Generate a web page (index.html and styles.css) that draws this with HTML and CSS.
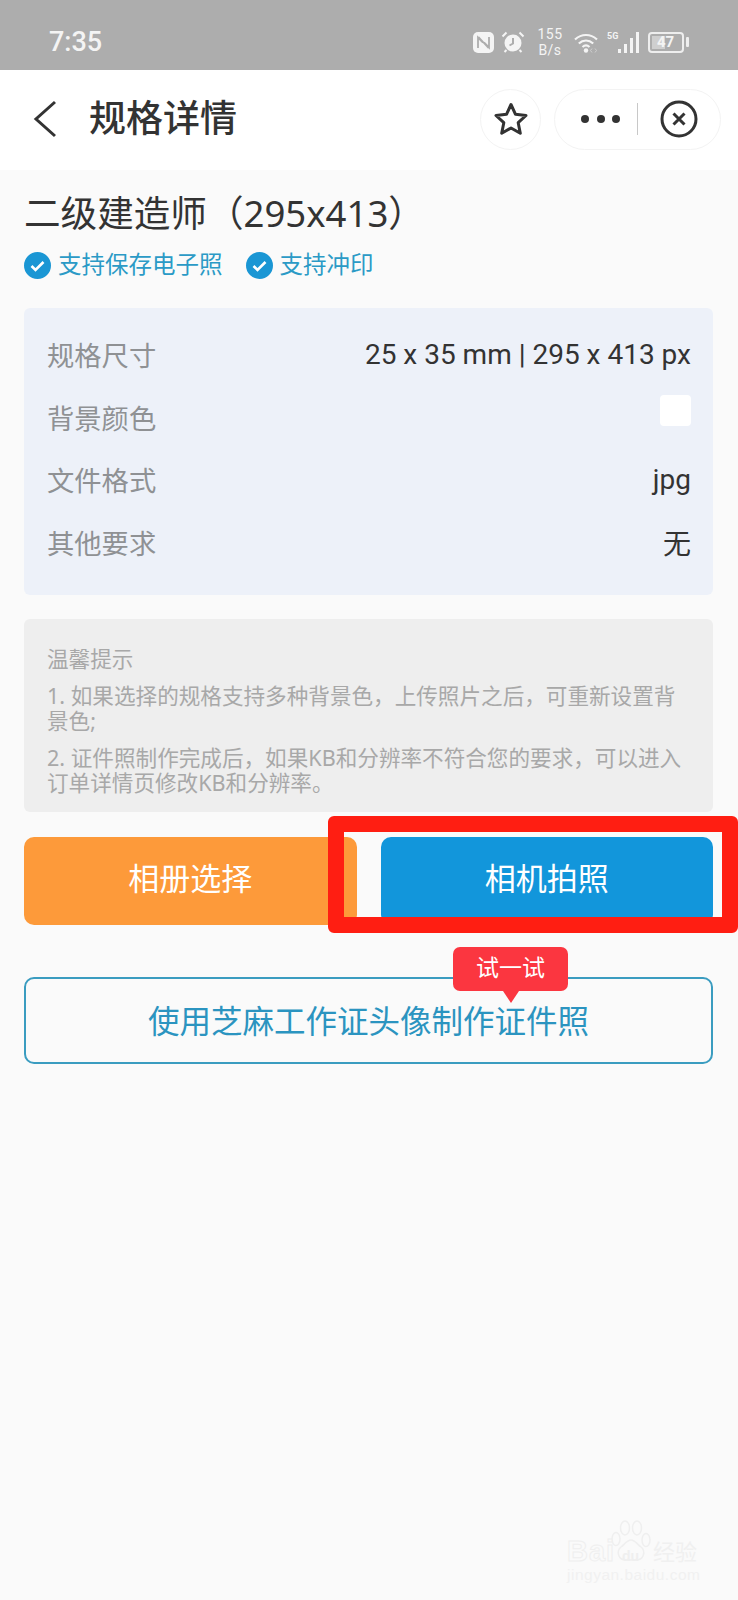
FILE: index.html
```html
<!DOCTYPE html>
<html lang="zh-CN">
<head>
<meta charset="utf-8">
<title>规格详情</title>
<link rel="stylesheet" href="styles.css">
</head>
<body>
<div class="phone">
  <header class="status">
    <span class="time">7:35</span>
    <div class="status-icons">
      <svg class="ic-nfc" width="21" height="21" viewBox="0 0 21 21"><rect width="21" height="21" rx="5" fill="#f4f4f4"/><path d="M5 16V5.500l5 5M16 5v10.500l-5-5M5.500 5l10 11" fill="none" stroke="#adadad" stroke-width="1.800"/></svg>
      <svg class="ic-alarm" width="24" height="22" viewBox="0 0 24 22"><circle cx="12" cy="12" r="8.500" fill="#f4f4f4"/><path d="M12 7v5.500l-3.500 2" fill="none" stroke="#adadad" stroke-width="2"/><path d="M1.500 5.500 5.500 1.500M22.500 5.500 18.500 1.500M5.500 19 3.500 21M18.500 19 20.500 21" stroke="#f4f4f4" stroke-width="2"/></svg>
      <div class="speed"><span>155</span><span>B/s</span></div>
      <svg class="ic-wifi" width="26" height="21" viewBox="0 0 26 21"><path d="M1 7.500c6.500-6 15.500-6 22 0M4.800 11.500c4.300-4 10.100-4 14.400 0M8.500 15c2.200-2 4.800-2 7 0" fill="none" stroke="#f4f4f4" stroke-width="2.200"/><circle cx="12" cy="18.500" r="2.200" fill="#f4f4f4"/><path d="M18 16.500l-1.500 2 1.500 2M21 16.500l1.500 2-1.500 2" fill="none" stroke="#cfcfcf" stroke-width="1"/></svg>
      <div class="net">
        <span class="fiveg">5G</span>
        <svg width="23" height="21" viewBox="0 0 23 21"><rect x="0" y="17" width="3" height="4" fill="#f4f4f4"/><rect x="6" y="12" width="3" height="9" fill="#f4f4f4"/><rect x="12" y="6" width="3" height="15" fill="#f4f4f4"/><rect x="18" y="0" width="3" height="21" fill="#f4f4f4"/></svg>
      </div>
      <div class="battery-wrap">
        <div class="battery"><span class="battery-num">47</span></div>
        <i class="battery-nub"></i>
      </div>
    </div>
  </header>

  <nav class="nav">
    <svg class="back" width="24" height="38" viewBox="0 0 24 38"><path d="M22 2 3 19l19 17" fill="none" stroke="#333" stroke-width="3"/></svg>
    <h1 class="nav-title">规格详情</h1>
    <div class="nav-actions">
      <div class="star-btn">
        <svg width="36" height="36" viewBox="0 0 36 36"><path d="M18 3.500l4.500 9.800 10.500 1.200-7.800 7.200 2.100 10.600L18 27l-9.300 5.300 2.100-10.600L3 14.500l10.500-1.200z" fill="none" stroke="#333" stroke-width="3" stroke-linejoin="round"/></svg>
      </div>
      <div class="capsule">
        <div class="dots"><i></i><i></i><i></i></div>
        <i class="divider"></i>
        <svg width="38" height="38" viewBox="0 0 38 38"><circle cx="19" cy="19" r="17" fill="none" stroke="#333" stroke-width="3"/><path d="M13.500 13.500l11 11M24.500 13.500l-11 11" stroke="#333" stroke-width="3"/></svg>
      </div>
    </div>
  </nav>

  <main class="main">
    <h2 class="title">二级建造师（295x413）</h2>
    <div class="tags">
      <div class="tag">
        <svg width="27" height="27" viewBox="0 0 27 27"><circle cx="13.500" cy="13.500" r="13.500" fill="#1a96d4"/><path d="M7.500 14l4 4 8-8" fill="none" stroke="#fff" stroke-width="2.600"/></svg>
        <span class="tag-text">支持保存电子照</span>
      </div>
      <div class="tag">
        <svg width="27" height="27" viewBox="0 0 27 27"><circle cx="13.500" cy="13.500" r="13.500" fill="#1a96d4"/><path d="M7.500 14l4 4 8-8" fill="none" stroke="#fff" stroke-width="2.600"/></svg>
        <span class="tag-text">支持冲印</span>
      </div>
    </div>

    <section class="spec">
      <div class="spec-row"><span class="spec-label">规格尺寸</span><span class="spec-value">25 x 35 mm | 295 x 413 px</span></div>
      <div class="spec-row"><span class="spec-label">背景颜色</span><i class="swatch"></i></div>
      <div class="spec-row"><span class="spec-label">文件格式</span><span class="spec-value">jpg</span></div>
      <div class="spec-row"><span class="spec-label">其他要求</span><span class="spec-value">无</span></div>
    </section>

    <section class="tips">
      <p class="tips-head">温馨提示</p>
      <p class="tips-line">1. 如果选择的规格支持多种背景色，上传照片之后，可重新设置背景色;</p>
      <p class="tips-line">2. 证件照制作完成后，如果KB和分辨率不符合您的要求，可以进入订单详情页修改KB和分辨率。</p>
    </section>

    <div class="actions">
      <div class="btn btn-orange">相册选择</div>
      <div class="btn btn-blue">相机拍照</div>
    </div>

    <div class="outline-btn">
      <span>使用芝麻工作证头像制作证件照</span>
      <div class="badge">试一试</div>
    </div>
  </main>

  <div class="highlight"></div>

  <div class="watermark">
    <svg class="paw" width="40" height="46" viewBox="0 0 40 46"><g fill="none" stroke="#efefef" stroke-width="1.500"><ellipse cx="5" cy="19" rx="4" ry="6.500"/><ellipse cx="14" cy="8" rx="4.500" ry="7"/><ellipse cx="26" cy="8" rx="4.500" ry="7"/><ellipse cx="35" cy="20" rx="4" ry="6.500"/><path d="M20 20c-4 0-6 4-10 7-5 4-3 13 5 13h10c8 0 10-9 5-13-4-3-6-7-10-7z"/></g></svg>
    <span class="wm-bai">Bai</span>
    <span class="wm-du">du</span>
    <span class="wm-jy">经验</span>
    <span class="wm-url">jingyan.baidu.com</span>
  </div>
</div>
</body>
</html>
```

FILE: styles.css
```css
* { box-sizing: border-box; }
html, body { margin: 0; padding: 0; }
body { font-family: "Noto Sans", "Noto Sans CJK SC", sans-serif; }
h1, h2, p { margin: 0; font-weight: 400; }
i { display: block; }

.phone { position: relative; width: 738px; height: 1600px; background: #fafafa; overflow: hidden; }

.status { height: 70px; background: #adadad; display: flex; align-items: center; justify-content: space-between; padding: 0 49px; color: #f4f4f4; font-family: Roboto, sans-serif; }
.time { font-size: 27px; font-weight: 500; line-height: 30px; margin-top: 14px; }
.status-icons { display: flex; align-items: center; margin-top: 14px; }
.ic-nfc { margin-right: 7px; }
.ic-alarm { margin-right: 12px; }
.speed { display: flex; flex-direction: column; align-items: center; width: 26px; font-size: 14px; letter-spacing: .5px; line-height: 16.500px; margin-right: 11px; }
.ic-wifi { margin-right: 6px; }
.net { position: relative; display: flex; width: 35px; justify-content: flex-end; margin-right: 7px; }
.fiveg { position: absolute; left: 1px; top: -1px; font-size: 9px; line-height: 10px; font-weight: 700; }
.battery-wrap { display: flex; align-items: center; gap: 2px; }
.battery { width: 36px; height: 21px; border: 2px solid #eee; border-radius: 4px; padding: 2px; display: flex; background: linear-gradient(90deg, #cfcfcf 0 47%, transparent 47%); background-clip: content-box; }
.battery-num { font-size: 15px; line-height: 13px; font-weight: 700; padding-left: 5px; color: #f4f4f4; }
.battery-nub { width: 3px; height: 10px; border-radius: 1px; background: #eee; }

.nav { height: 100px; background: #fff; display: flex; align-items: center; padding: 0 17px 4px 33px; }
.back { margin-right: 32px; margin-top: 2px; }
.nav-title { font-size: 37px; line-height: 50px; color: #333; font-weight: 500; flex: 1; }
.nav-actions { display: flex; gap: 13px; align-items: center; margin-top: 2px; }
.star-btn { width: 61px; height: 61px; border: 1px solid #f3f3f3; border-radius: 50%; display: flex; align-items: center; justify-content: center; }
.capsule { width: 167px; height: 61px; border: 1px solid #f3f3f3; border-radius: 31px; display: flex; align-items: center; padding: 0 21px 0 26px; }
.dots { display: flex; gap: 7.500px; }
.dots i { width: 8px; height: 8px; border-radius: 50%; background: #333; }
.divider { width: 1px; height: 32px; background: #c8c8c8; margin: 0 22px 0 17px; }

.main { padding: 18px 25px 0 24px; }
.title { font-size: 36.600px; line-height: 50px; color: #333; }
.tags { display: flex; gap: 23px; margin-top: 13px; height: 28px; }
.tag { display: flex; align-items: center; gap: 7px; font-size: 23.500px; color: #2b9ac6; line-height: 28px; }
.tag-text { padding-bottom: 2px; }

.spec { margin-top: 29px; height: 287px; padding: 15px 22px 0 23px; background: #edf1f9; border-radius: 6px; }
.spec-row { height: 62.500px; display: flex; align-items: center; justify-content: space-between; font-size: 27px; }
.spec-label { color: #8f9194; font-size: 27.300px; }
.spec-value { color: #333; font-family: Roboto, "Noto Sans CJK SC", sans-serif; font-size: 28px; }
.swatch { width: 31px; height: 31px; background: #fff; border-radius: 4px; margin-top: -12px; }

.tips { margin-top: 24px; height: 193px; padding: 27px 22px 0 23px; background: #eee; border-radius: 6px; font-size: 21.600px; line-height: 25px; color: #a8a8a8; }
.tips-line { margin-top: 12px; }

.actions { display: flex; gap: 24px; margin-top: 25px; }
.btn { flex: 1; height: 88px; padding-bottom: 10px; border-radius: 10px; display: flex; align-items: center; justify-content: center; color: #fff; font-size: 31px; }
.btn-orange { background: #fd9a3a; }
.btn-blue { background: #1296db; }

.outline-btn { position: relative; margin-top: 52px; height: 87px; padding-bottom: 4px; border: 2px solid #3a9cc0; border-radius: 10px; display: flex; align-items: center; justify-content: center; font-size: 31.500px; color: #2b94c0; }
.badge { position: absolute; left: 427px; top: -32px; width: 115px; height: 44px; background: #fb3640; border-radius: 7px; color: #fff; font-size: 23px; line-height: 40px; text-align: center; }
.badge::after { content: ""; position: absolute; left: 50%; top: 44px; margin-left: -8px; border: 8px solid transparent; border-top: 12px solid #fb3640; border-bottom: 0; }

.highlight { position: absolute; left: 328px; top: 816px; width: 410px; height: 117px; border: 16px solid #ff1e12; border-radius: 6px; }

.watermark { position: absolute; left: 567px; top: 1520px; width: 132px; height: 66px; color: #f0f0f0; }
.paw { position: absolute; left: 44px; top: 0; }
.wm-bai { position: absolute; left: 0; top: 16px; font-size: 29px; line-height: 30px; font-weight: 700; font-family: "Liberation Sans", sans-serif; letter-spacing: 1px; color: #fafafa; -webkit-text-stroke: 1px #efefef; }
.wm-du { position: absolute; left: 55px; top: 28px; font-size: 14px; line-height: 16px; font-weight: 700; color: #efefef; font-family: "Liberation Sans", sans-serif; }
.wm-jy { position: absolute; left: 86px; top: 15px; font-size: 22px; line-height: 30px; color: #f0f0f0; font-family: "Noto Sans CJK SC", sans-serif; }
.wm-url { position: absolute; left: 0; top: 46px; font-size: 15.500px; line-height: 18px; letter-spacing: .5px; color: #f1f1f1; white-space: nowrap; font-family: "Liberation Sans", sans-serif; }
```
